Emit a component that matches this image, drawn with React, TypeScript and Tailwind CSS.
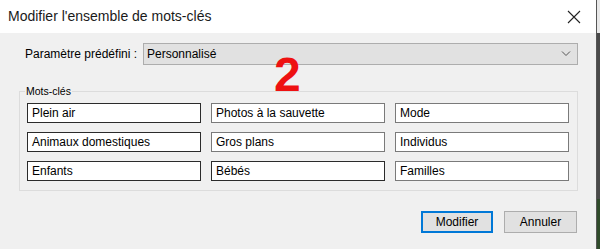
import React from 'react';

const keywords: { label: string; dark: boolean }[][] = [
  [
    { label: 'Plein air', dark: true },
    { label: 'Photos à la sauvette', dark: false },
    { label: 'Mode', dark: false },
  ],
  [
    { label: 'Animaux domestiques', dark: true },
    { label: 'Gros plans', dark: false },
    { label: 'Individus', dark: false },
  ],
  [
    { label: 'Enfants', dark: true },
    { label: 'Bébés', dark: true },
    { label: 'Familles', dark: false },
  ],
];

const App: React.FC = () => {
  return (
    <div className="relative flex w-[600px] h-[249px] overflow-hidden font-['Liberation_Sans',sans-serif] text-black">
      <div className="flex flex-col w-[596px] h-full bg-[#f0f0f0]">
        {/* title bar */}
        <div className="flex items-center justify-between h-[33px] bg-white pl-[8px] pr-[12px]">
          <span className="text-[14px] text-[#1a1a1a]">Modifier l'ensemble de mots-clés</span>
          <svg width="14" height="14" viewBox="0 0 14 14" className="mr-[3px]">
            <path d="M1 1 L13 13 M13 1 L1 13" stroke="#222" strokeWidth="1.1" fill="none" />
          </svg>
        </div>

        {/* preset row */}
        <div className="flex items-center mt-[10px] pl-[25px]">
          <span className="w-[118px] text-[12px]">Paramètre prédéfini :</span>
          <div className="flex items-center justify-between w-[435px] h-[22px] bg-[#e1e1e1] border border-[#adadad] pl-[3px] pr-[6px] text-[12px]">
            <span>Personnalisé</span>
            <svg width="10" height="6" viewBox="0 0 10 6">
              <path d="M1 0.5 L5 4.5 L9 0.5" stroke="#555" strokeWidth="1" fill="none" />
            </svg>
          </div>
        </div>

        {/* group box */}
        <div className="relative ml-[19px] mt-[26px] w-[559px] h-[100px] border border-[#dcdcdc]">
          <span className="absolute left-[5px] top-[-8px] px-[1px] bg-[#f0f0f0] text-[10.5px] leading-[14px]">Mots-clés</span>
          <div className="grid grid-cols-[174px_174px_174px] gap-x-[10px] gap-y-[9px] pt-[11px] pl-[7px]">
            {keywords.flat().map((k) => (
              <div
                key={k.label}
                className={
                  k.dark
                    ? 'flex items-center h-[20px] bg-white border border-[#2b2b2b] pl-[4px] text-[12px]'
                    : 'flex items-center h-[20px] bg-white border border-[#7a7a7a] pl-[4px] text-[12px]'
                }
              >
                {k.label}
              </div>
            ))}
          </div>
        </div>

        {/* buttons */}
        <div className="flex justify-end gap-[11px] mt-[20px] pr-[19px]">
          <button className="w-[72px] h-[22px] bg-[#e1e1e1] border-2 border-[#0078d7] text-[12px]">Modifier</button>
          <button className="w-[73px] h-[22px] bg-[#e1e1e1] border border-[#adadad] text-[12px]">Annuler</button>
        </div>
      </div>

      {/* window behind */}
      <div className="flex flex-col w-[4px] h-full border-l border-[#555] bg-[#3b3b3b]">
        <div className="h-[33px] bg-[#e8e8e8]" />
        <div className="flex-1 bg-[#4a4a4a]" />
        <div className="h-[50px] bg-[#2f4a2a]" />
      </div>

      {/* annotation */}
      <span className="absolute left-[274px] top-[49px] text-[48px] leading-[52px] font-bold text-[#ee1111]">2</span>
    </div>
  );
};

export default App;
